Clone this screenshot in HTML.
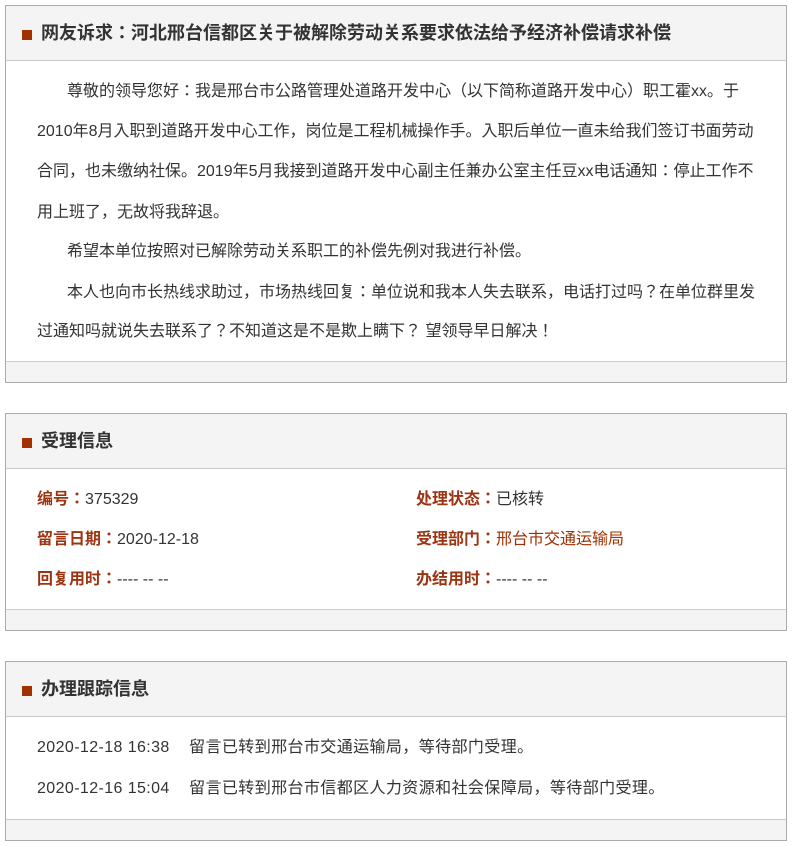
<!DOCTYPE html>
<html><head><meta charset="utf-8">
<style>
*{margin:0;padding:0;box-sizing:border-box}
body{width:794px;height:847px;background:#fff;font-family:"Liberation Sans","Noto Sans CJK JP",sans-serif;color:#333;font-size:16px;position:relative;overflow:hidden}
.box{position:absolute;left:5px;width:782px;border:1px solid #aaa;background:#fff}
.hd{height:55px;background:#f4f4f4;border-bottom:1px solid #ccc;position:relative}
.hd i{position:absolute;left:16px;top:24px;width:10px;height:10px;background:#a33000}
.hd b{position:absolute;left:35px;top:15px;font-size:18px;line-height:24px;color:#333}
.ft{height:21px;background:#f4f4f4;border-top:1px solid #ccc;position:absolute;left:0;right:0;bottom:0}
.p{position:absolute;left:31px;width:730px;line-height:40px;text-indent:30px;white-space:nowrap}
.r{position:absolute;line-height:20px;white-space:nowrap}
.l{color:#9c3412;font-weight:bold}
</style></head><body>
<div class="box" style="top:5px;height:378px">
 <div class="hd"><i></i><b>网友诉求：河北邢台信都区关于被解除劳动关系要求依法给予经济补偿请求补偿</b></div>
 <div class="p" style="top:66px">尊敬的领导您好：我是邢台市公路管理处道路开发中心（以下简称道路开发中心）职工霍xx。于</div>
 <div class="p" style="top:106px;text-indent:0">2010年8月入职到道路开发中心工作，岗位是工程机械操作手。入职后单位一直未给我们签订书面劳动</div>
 <div class="p" style="top:146px;text-indent:0">合同，也未缴纳社保。2019年5月我接到道路开发中心副主任兼办公室主任豆xx电话通知：停止工作不</div>
 <div class="p" style="top:187px;text-indent:0">用上班了，无故将我辞退。</div>
 <div class="p" style="top:226px">希望本单位按照对已解除劳动关系职工的补偿先例对我进行补偿。</div>
 <div class="p" style="top:267px">本人也向市长热线求助过，市场热线回复：单位说和我本人失去联系，电话打过吗？在单位群里发</div>
 <div class="p" style="top:306px;text-indent:0">过通知吗就说失去联系了？不知道这是不是欺上瞒下？ 望领导早日解决！</div>
 <div class="ft"></div>
</div>
<div class="box" style="top:413px;height:218px">
 <div class="hd"><i></i><b>受理信息</b></div>
 <div class="r" style="left:31px;top:76px"><span class="l">编号：</span>375329</div>
 <div class="r" style="left:31px;top:116px"><span class="l">留言日期：</span>2020-12-18</div>
 <div class="r" style="left:31px;top:156px"><span class="l">回复用时：</span>---- -- --</div>
 <div class="r" style="left:410px;top:76px"><span class="l">处理状态：</span>已核转</div>
 <div class="r" style="left:410px;top:116px"><span class="l">受理部门：</span><span style="color:#a03000">邢台市交通运输局</span></div>
 <div class="r" style="left:410px;top:156px"><span class="l">办结用时：</span>---- -- --</div>
 <div class="ft"></div>
</div>
<div class="box" style="top:661px;height:180px">
 <div class="hd"><i></i><b>办理跟踪信息</b></div>
 <div class="r" style="left:31px;top:76px;letter-spacing:0.4px">2020-12-18 16:38&nbsp;&nbsp;&nbsp;&nbsp;留言已转到邢台市交通运输局，等待部门受理。</div>
 <div class="r" style="left:31px;top:117px;letter-spacing:0.4px">2020-12-16 15:04&nbsp;&nbsp;&nbsp;&nbsp;留言已转到邢台市信都区人力资源和社会保障局，等待部门受理。</div>
 <div class="ft"></div>
</div>
</body></html>
